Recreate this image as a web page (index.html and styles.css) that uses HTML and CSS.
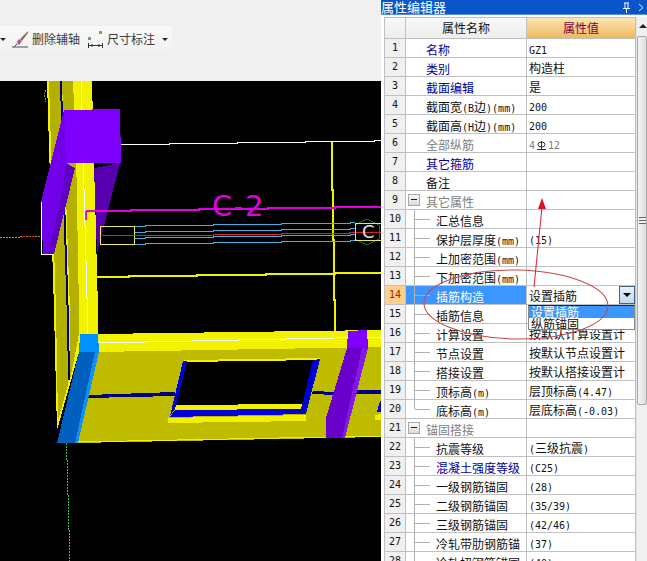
FILE: index.html
```html
<!DOCTYPE html>
<html lang="zh">
<head>
<meta charset="utf-8">
<title>属性编辑器</title>
<link rel="stylesheet" href="styles.css">
</head>
<body>
<div class="page">
  <div class="work">
    <div class="topbar">
      <div class="toolbar">
        <span class="caret"></span>
        <svg class="ico" width="17" height="17" viewBox="0 0 17 17"><path d="M16 0 8 8l2 2 6-8z" fill="#8a7a50"/><path d="M7 8 4 12l3 2 3-4z" fill="#c050a0"/><path d="M5 10 3 13l3 1z" fill="#e8e0d0"/><path d="M0 16h16" stroke="#405060"/><path d="M2 16l3-3" stroke="#405060"/></svg>
        <span class="tool-label">删除辅轴</span>
        <svg class="ico dim" width="20" height="18" viewBox="0 0 20 18"><rect x="1" y="7" width="3" height="3" fill="#60b060"/><rect x="12" y="1" width="3" height="3" fill="#60b060"/><path d="M1.500 13v5M15.500 13v5M2 15.500h13" stroke="#303030" fill="none"/><path d="M5 14v3M12 14v3" stroke="#303030"/></svg>
        <span class="tool-label">尺寸标注</span>
        <span class="caret end"></span>
      </div>
    </div>
    <svg class="scene" width="381" height="480" viewBox="0 81 381 480">
      <rect x="0" y="81" width="381" height="480" fill="#000"/>
      <path class="dash-g" d="M46 90 44 94 46 102"/>
      <path class="dash-y" d="M0 237.500H20V236.500H42"/>
      <path class="dash-r" d="M22 236.500H36"/>
      <path class="dash-g" d="M66.500 443V460H67.500V495H68.500V530H69.500V561"/>
      <!-- wall going back -->
      <polygon fill="#f2f200" points="47,81 92,81 98,310 98,334 79,352 57,430 54,310"/>
      <polygon fill="#b4b000" points="49,81 60,81 62,150 68,310 68,385 58,420 56,310"/>
      <polygon fill="#b4b000" points="62,81 73,81 76,150 79,310 79,334 70,380 70,310"/>
      <path d="M61 81 64 200 68 320 69 380" fill="none" stroke="#000080" stroke-width="2"/>
      <path d="M81 81 88 333" fill="none" stroke="#fff" stroke-width="1"/>
      <!-- wall facing -->
      <polygon fill="#f2f200" points="98,334 381,330 381,347 98,352"/>
      <path d="M98 343 381 337" stroke="#fff" fill="none"/>
      <polygon fill="#bfbc00" points="96,352 381,347 381,437 76,443"/>
      <path d="M76 442 381 436" stroke="#f2f200" fill="none"/>
      <polygon fill="#000080" points="87,395 175,392 175,396 87,398"/>
      <polygon fill="#000080" points="313,391 335,392 335,395 312,394"/>
      <polygon fill="#000080" points="356,390 381,390 381,394 355,394"/>
      <polygon fill="#f2f200" points="168,418 306,415 306,421 168,423"/>
      <polygon fill="#0000d8" points="377,412 380,401 381,401 381,412"/>
      <polygon fill="#f2f200" points="375,415 381,414 381,420 375,420"/>
      <!-- opening -->
      <polygon fill="#000" points="183,361 320,359 302,405 175,405"/>
      <polygon fill="#f2f200" points="184,360 320,358 320,360 184,362"/>
      <polygon fill="#f2f200" points="175,405 302,404 301,409 175,410"/>
      <polygon fill="#0000d8" points="170,417 306,414 301,409 175,410"/>
      <polygon fill="#0000d8" points="183,361 187,361 175,409 170,416"/>
      <polygon fill="#0000d8" points="313,360 320,359 306,414 301,409"/>
      <!-- blue column -->
      <polygon fill="#0060c0" points="79,352 99,352 76,443 57,443"/>
      <polygon fill="#0090ff" points="80,334 98,334 99,352 79,352"/>
      <polygon fill="#1090f0" points="95,352 99,352 78,443 75,443"/>
      <!-- purple column -->
      <polygon fill="#6a00cc" points="347,348 368,348 345,438 326,438 326,418"/>
      <polygon fill="#8000ff" points="348,331 367,330 368,348 347,348"/>
      <polygon fill="#8418e8" points="362,348 368,348 345,438 342,438"/>
      <!-- floating column -->
      <polygon fill="#7000e8" points="64,110 66,163 75,168 54,254 43,254 41,202"/>
      <polygon fill="#6000c0" points="66,163 75,168 54,254 48,254 62,195"/>
      <polygon fill="#5800b0" points="120,163 94,168 97,253"/>
      <polygon fill="#8000ff" points="64,110 120,109 121,163 66,163"/>
      <path d="M41.500 202V254.500H54" fill="none" stroke="#fff"/>
      <!-- guide lines -->
      <path class="ln-w" d="M121 144.500H169V143.500H237V142.500H305V141.500H374V140.500H381"/>
      <path class="ln-y2" d="M332 142V190H333V240H334V300H335V340"/>
      <path class="ln-y2" d="M97 277H129V276H197V275H266V274H335V273H381"/>
      <path class="ln-m" d="M86 211H131V210H199V209H268V208H335V207H381"/>
      <path class="ln-p" d="M86 211V220"/>
      <text class="grid-label" x="212" y="216">C</text>
      <path class="ln-m" d="M235 208h7"/>
      <text class="grid-label" x="245" y="216">2</text>
      <rect class="box-y" x="100.500" y="226.500" width="34" height="18"/>
      <path class="ln-c" d="M135 226.500H145V225.500H213V224.500H281V223.500H350V222.500H355"/>
      <path class="ln-c" d="M135 232.500H145V231.500H213V230.500H281V229.500H350V228.500H355"/>
      <path class="ln-c" d="M135 238.500H145V237.500H213V236.500H281V235.500H350V234.500H355"/>
      <path class="ln-c" d="M135 244.500H145V243.500H213V242.500H281V241.500H350V240.500H355"/>
      <path class="ln-r" d="M102 235.500H213V234.500H281V233.500H349V232.500H381"/>
      <polygon class="hex" points="367,219 379,225 379,239 367,245 355,239 355,225"/>
      <rect class="box-y" x="355.500" y="223.500" width="26" height="17"/>
      <text class="hex-label" x="362" y="238">C</text>
    </svg>
  </div>

  <aside class="panel">
    <div class="title"><span>属性编辑器</span>
      <svg class="pin" width="9" height="11" viewBox="0 0 9 11"><path d="M2 1h5M3 1v5M6 1v5M1 6.500h7M4.500 7v4" stroke="#fff" fill="none"/></svg>
      <svg class="more" width="6" height="9" viewBox="0 0 6 9"><path d="M1 1l4 3.500L1 8" stroke="#dfe8ff" fill="none"/></svg>
    </div>
    <div class="body">
      <div class="grid-wrap">
      <table class="grid">
        <colgroup><col class="c1"><col class="c2"><col class="c3"></colgroup>
        <thead><tr><th class="idx"></th><th>属性名称</th><th class="val-h">属性值</th></tr></thead>
        <tbody>
          <tr><td class="idx">1</td><td class="nm link">名称</td><td class="val"><span class="l">GZ1</span></td></tr>
          <tr><td class="idx">2</td><td class="nm link">类别</td><td class="val">构造柱</td></tr>
          <tr><td class="idx">3</td><td class="nm link">截面编辑</td><td class="val">是</td></tr>
          <tr><td class="idx">4</td><td class="nm">截面宽<span class="l">(B</span>边<span class="l">)(mm)</span></td><td class="val"><span class="l">200</span></td></tr>
          <tr><td class="idx">5</td><td class="nm">截面高<span class="l">(H</span>边<span class="l">)(mm)</span></td><td class="val"><span class="l">200</span></td></tr>
          <tr><td class="idx">6</td><td class="nm dim-t">全部纵筋</td><td class="val dim-t"><span class="l">4</span><svg class="rebar" width="9" height="9" viewBox="0 0 9 9"><ellipse cx="4.500" cy="3.500" rx="3.500" ry="2.500" fill="none" stroke="#333"/><path d="M4.500 0v8M0 8.500h9" stroke="#333" fill="none"/></svg><span class="l">12</span></td></tr>
          <tr><td class="idx">7</td><td class="nm link">其它箍筋</td><td class="val"></td></tr>
          <tr><td class="idx">8</td><td class="nm">备注</td><td class="val"></td></tr>
          <tr><td class="idx">9</td><td class="nm grp dim-t"><span class="box"></span>其它属性</td><td class="val"></td></tr>
          <tr><td class="idx">10</td><td class="nm sub">汇总信息</td><td class="val"></td></tr>
          <tr><td class="idx">11</td><td class="nm sub">保护层厚度<span class="l">(mm)</span></td><td class="val"><span class="l">(15)</span></td></tr>
          <tr><td class="idx">12</td><td class="nm sub">上加密范围<span class="l">(mm)</span></td><td class="val"></td></tr>
          <tr><td class="idx">13</td><td class="nm sub">下加密范围<span class="l">(mm)</span></td><td class="val"></td></tr>
          <tr class="sel"><td class="idx">14</td><td class="nm sub">插筋构造</td><td class="val">设置插筋<span class="drop-btn"><span class="drop-arrow"></span></span></td></tr>
          <tr><td class="idx">15</td><td class="nm sub">插筋信息</td><td class="val"></td></tr>
          <tr><td class="idx">16</td><td class="nm sub">计算设置</td><td class="val">按默认计算设置计</td></tr>
          <tr><td class="idx">17</td><td class="nm sub">节点设置</td><td class="val">按默认节点设置计</td></tr>
          <tr><td class="idx">18</td><td class="nm sub">搭接设置</td><td class="val">按默认搭接设置计</td></tr>
          <tr><td class="idx">19</td><td class="nm sub">顶标高<span class="l">(m)</span></td><td class="val">层顶标高<span class="l">(4.47)</span></td></tr>
          <tr><td class="idx">20</td><td class="nm sub last">底标高<span class="l">(m)</span></td><td class="val">层底标高<span class="l">(-0.03)</span></td></tr>
          <tr><td class="idx">21</td><td class="nm grp dim-t"><span class="box"></span>锚固搭接</td><td class="val"></td></tr>
          <tr><td class="idx">22</td><td class="nm sub">抗震等级</td><td class="val"><span class="l">(</span>三级抗震<span class="l">)</span></td></tr>
          <tr><td class="idx">23</td><td class="nm sub link">混凝土强度等级</td><td class="val"><span class="l">(C25)</span></td></tr>
          <tr><td class="idx">24</td><td class="nm sub">一级钢筋锚固</td><td class="val"><span class="l">(28)</span></td></tr>
          <tr><td class="idx">25</td><td class="nm sub">二级钢筋锚固</td><td class="val"><span class="l">(35/39)</span></td></tr>
          <tr><td class="idx">26</td><td class="nm sub">三级钢筋锚固</td><td class="val"><span class="l">(42/46)</span></td></tr>
          <tr><td class="idx">27</td><td class="nm sub">冷轧带肋钢筋锚</td><td class="val"><span class="l">(37)</span></td></tr>
          <tr><td class="idx">28</td><td class="nm sub">冷轧扭钢筋锚固</td><td class="val"><span class="l">(40)</span></td></tr>
        </tbody>
      </table>
      <ul class="dropdown"><li class="on">设置插筋</li><li>纵筋锚固</li></ul>
      </div>
      <div class="scrollbar">
        <div class="sb-up"></div>
        <div class="sb-thumb"><span class="grip"></span></div>
      </div>
    </div>
    <svg class="notes" width="266" height="561" viewBox="381 0 266 561">
      <ellipse cx="516" cy="304.500" rx="92" ry="34.500" fill="none" stroke="#c84848" transform="rotate(1 516 304)"/>
      <path d="M534 287 542 207" stroke="#d82030" fill="none"/>
      <polygon points="542,198 546,209 538,209" fill="#e01020"/>
    </svg>
  </aside>
</div>
</body>
</html>
```
FILE: styles.css
```css
* { box-sizing: border-box; }
html, body { margin: 0; padding: 0; }
body {
  width: 647px;
  height: 561px;
  overflow: hidden;
  font-family: "Noto Sans CJK SC", "Liberation Sans", sans-serif;
  font-size: 12px;
}
.page { display: flex; width: 647px; height: 561px; }

/* left work area */
.work { width: 381px; flex: none; display: flex; flex-direction: column; }
.topbar { height: 81px; background: #f0f0f0; padding-top: 26px; }
.toolbar {
  width: 172px;
  height: 26px;
  display: flex;
  align-items: center;
  background: linear-gradient(#f8f8f8, #f2f2f2);
  color: #3a3a3a;
  white-space: nowrap;
  line-height: 16px;
}
.caret {
  width: 0; height: 0;
  border-left: 3px solid transparent;
  border-right: 3px solid transparent;
  border-top: 3px solid #222;
  margin-right: 6px;
  flex: none;
}
.caret.end { margin: 0 0 0 7px; }
.ico { flex: none; margin-right: 3px; }
.ico.dim { margin-left: 7px; margin-right: 0; }
.scene { display: block; flex: none; }
.scene path, .scene polygon, .scene rect { shape-rendering: crispEdges; }

.ln-w { fill: none; stroke: #fff; }
.ln-y2 { fill: none; stroke: #f2f200; stroke-width: 2; }
.ln-m { fill: none; stroke: #e000e0; stroke-width: 2; }
.ln-p { fill: none; stroke: #f02060; stroke-width: 2; }
.ln-c { fill: none; stroke: #40b0e0; }
.ln-r { fill: none; stroke: #e02020; }
.box-y { fill: none; stroke: #e8e860; }
.hex { fill: none; stroke: #207020; }
.dash-g { fill: none; stroke: #40c040; stroke-dasharray: 2 1; }
.dash-y { fill: none; stroke: #a0a020; stroke-dasharray: 2 1; }
.dash-r { fill: none; stroke: #c02020; stroke-dasharray: 3 2; }
.grid-label { font-family: "DejaVu Sans", sans-serif; font-size: 29px; fill: #e000e0; }
.hex-label { font-family: "DejaVu Sans", sans-serif; font-size: 18px; fill: #e0e0e0; }

/* property panel */
.panel { position: relative; flex: none; width: 266px; height: 561px; background: #f4f4f4; overflow: hidden; display: flex; flex-direction: column; }
.title {
  height: 15px;
  flex: none;
  background: #0a56c8;
  border-bottom: 1px solid #5a8ed8;
  color: #fff;
  font-size: 13px;
  line-height: 14px;
  display: flex;
  align-items: center;
  white-space: nowrap;
}
.pin { margin-left: 176px; }
.more { margin-left: 7px; }
.body { flex: 1; display: flex; padding: 2px 0 0 3px; min-height: 0; background: #fff; }
.grid-wrap { position: relative; width: 252px; flex: none; border-left: 1px solid #c0c0c0; }
.grid { table-layout: fixed; border-collapse: separate; border-spacing: 0; width: 251px; background: #fff; }
.c1 { width: 21px; }
.c2 { width: 121px; }
.c3 { width: 109px; }
.grid th, .grid td {
  padding: 0;
  border-right: 1px solid #c0c0c0;
  border-bottom: 1px solid #c0c0c0;
  white-space: nowrap;
  overflow: hidden;
  height: 19px;
  line-height: 14px;
  font-weight: 400;
  color: #111;
}
.grid th { height: 22px; text-align: center; background: linear-gradient(#f8f8f8, #eeeeee); border-top: 1px solid #c0c0c0; }
.grid th.val-h { background: linear-gradient(#fbe6b4, #f0b860); color: #7a0040; }
.grid td.idx { text-align: center; background: #f0f0f0; font-family: "DejaVu Sans Mono", monospace; font-size: 10px; color: #111; }
.grid th.idx { background: linear-gradient(#f8f8f8, #eeeeee); }
.grid td.nm { padding: 3px 0 0 20px; position: relative; }
.grid td.val { padding: 2px 0 0 2px; position: relative; }
.l { font-family: "DejaVu Sans Mono", monospace; font-size: 10px; line-height: 10px; opacity: .999; }
.grid td.link { color: #0000a0; }
.grid td.dim-t { color: #808080; }
.rebar { margin: 0 2px; vertical-align: -1px; }

.grid td.nm.sub { padding-left: 30px; }
.nm.sub::before { content: ""; position: absolute; left: 8px; top: 0; bottom: 0; width: 1px; background: #b0b0b0; }
.nm.sub::after { content: ""; position: absolute; left: 9px; width: 15px; top: 9px; height: 1px; background: #b0b0b0; }
.nm.last::before { bottom: 9px; }
.box {
  position: absolute;
  left: 2px;
  top: 3px;
  width: 12px;
  height: 12px;
  border: 1px solid #a8a8a8;
  background: linear-gradient(#f8f8f8, #dcdcdc);
}
.box::after { content: ""; position: absolute; left: 2px; right: 2px; top: 4px; height: 1px; background: #222; }

.grid .sel td.nm { background: #3c96ff; color: #fff; }
.grid .sel td.idx { background: #ffd08c; color: #a02000; }
.drop-btn {
  position: absolute;
  right: 0; top: 0;
  width: 16px; height: 18px;
  background: linear-gradient(#e6f0fa, #c4d8ee);
  border: 1px solid #46647e;
  display: flex; align-items: center; justify-content: center;
}
.drop-arrow { width: 0; height: 0; border-left: 4px solid transparent; border-right: 4px solid transparent; border-top: 4px solid #000; }

.dropdown {
  position: absolute;
  left: 143px;
  top: 288px;
  width: 107px;
  height: 25px;
  margin: 0;
  padding: 0;
  list-style: none;
  background: #fff;
  border: 1px solid #8a8a8a;
  border-top-color: #222;
  overflow: hidden;
  line-height: 12px;
}
.dropdown li { height: 12px; padding-left: 2px; color: #111; white-space: nowrap; }
.dropdown li.on { background: #3c96ff; color: #fff; }

.scrollbar { flex: 1; background: #f0f0f0; display: flex; flex-direction: column; border-left: 1px solid #e4e4e4; }
.sb-up { height: 19px; flex: none; position: relative; }
.sb-up::after { content: ""; position: absolute; left: 2px; top: 7px; border-left: 4px solid transparent; border-right: 4px solid transparent; border-bottom: 4px solid #222; }
.sb-thumb { height: 369px; flex: none; background: linear-gradient(90deg, #f4f4f4, #dedede); border: 1px solid #a8a8a8; border-radius: 2px; display: flex; align-items: center; justify-content: center; }
.grip { width: 7px; height: 7px; border-top: 1px solid #666; border-bottom: 1px solid #666; background: linear-gradient(#f0f0f0 40%, #666 40%, #666 60%, #f0f0f0 60%); }

.notes { position: absolute; left: 0; top: 0; pointer-events: none; }
```
